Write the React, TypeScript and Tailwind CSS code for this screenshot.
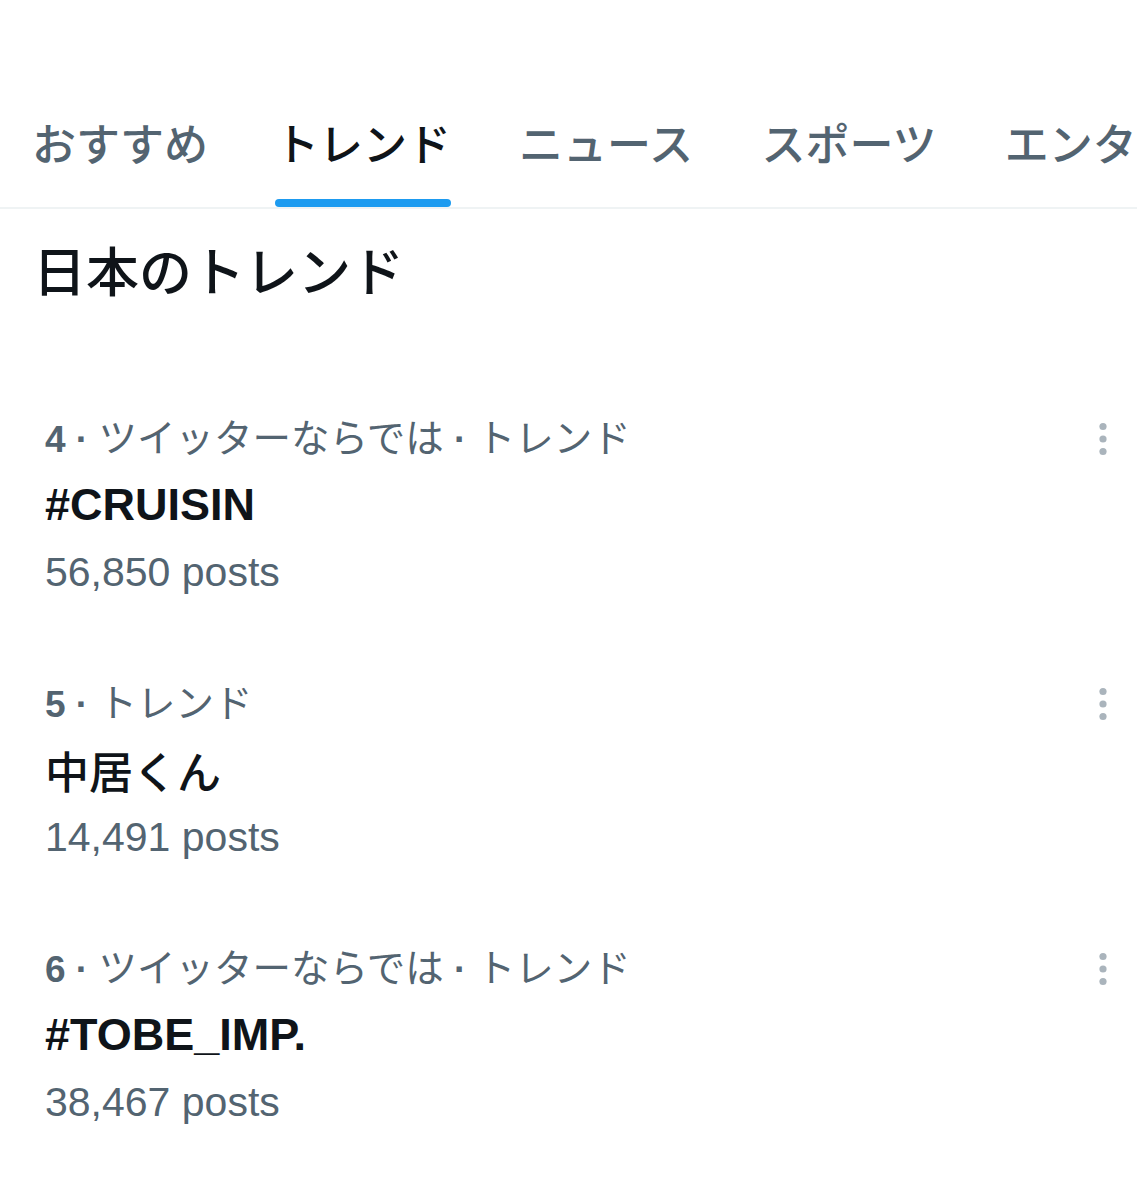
import React from "react";

const jp = "font-['Noto_Sans_CJK_JP',sans-serif]";
const mixed = "font-['Liberation_Sans','Noto_Sans_CJK_JP',sans-serif]";

const tabs = ["おすすめ", "トレンド", "ニュース", "スポーツ", "エンタメ"];

const trends = [
  { rank: 4, meta: ["ツイッターならでは", "トレンド"], title: "#CRUISIN", latin: true, posts: "56,850 posts" },
  { rank: 5, meta: ["トレンド"], title: "中居くん", latin: false, posts: "14,491 posts" },
  { rank: 6, meta: ["ツイッターならでは", "トレンド"], title: "#TOBE_IMP.", latin: true, posts: "38,467 posts" },
];

const Sep = () => <span className="text-[37px] font-bold"> · </span>;

const MoreIcon = () => (
  <svg width="10" height="36" viewBox="0 0 10 36" className="fill-[#aab4bc]">
    <circle cx="5" cy="5.5" r="3.6" />
    <circle cx="5" cy="18" r="3.6" />
    <circle cx="5" cy="30.5" r="3.6" />
  </svg>
);

export default function App() {
  return (
    <div className="w-[1137px] h-[1200px] bg-white overflow-hidden">
      {/* Tab bar */}
      <div className="pt-[97px] border-b-2 border-[#eff3f4]">
        <div className="flex gap-[67px] pl-[32px] whitespace-nowrap">
          {tabs.map((t, i) => (
            <div key={t} className="flex flex-col items-center shrink-0">
              <div
                className={`h-[90px] flex items-center text-[44px] font-medium ${jp} ${
                  i === 1 ? "text-[#0f1419]" : "text-[#536471]"
                }`}
              >
                {t}
              </div>
              <div
                className={`h-[8px] mt-[12px] w-[176px] rounded-full ${
                  i === 1 ? "bg-[#1d9bf0]" : "bg-transparent"
                }`}
              />
            </div>
          ))}
        </div>
      </div>

      {/* Heading */}
      <div className={`mt-[26px] h-[70px] flex items-center pl-[33px] text-[53px] font-medium text-[#0f1419] ${jp}`}>
        日本のトレンド
      </div>

      {/* Trends */}
      <div className="mt-[67px]">
        {trends.map((tr) => (
          <div key={tr.rank} className="pt-[31px] pb-[31px] pl-[45px] pr-[29px]">
            <div className="h-[68px] pt-[3px] flex items-center justify-between">
              <div className={`text-[38.5px] text-[#536471] ${mixed}`}>
                <span className="font-bold text-[37px]">{tr.rank}</span>
                {tr.meta.map((m) => (
                  <React.Fragment key={m}>
                    <Sep />
                    {m}
                  </React.Fragment>
                ))}
              </div>
              <MoreIcon />
            </div>
            <div
              className={`h-[68px] flex items-center text-[#0f1419] ${
                tr.latin
                  ? "text-[45px] font-bold font-['Liberation_Sans',sans-serif]"
                  : `text-[44px] font-medium ${jp}`
              }`}
            >
              {tr.title}
            </div>
            <div className="h-[67px] flex items-center text-[41px] text-[#536471] font-['Liberation_Sans',sans-serif]">
              {tr.posts}
            </div>
          </div>
        ))}
      </div>
    </div>
  );
}
